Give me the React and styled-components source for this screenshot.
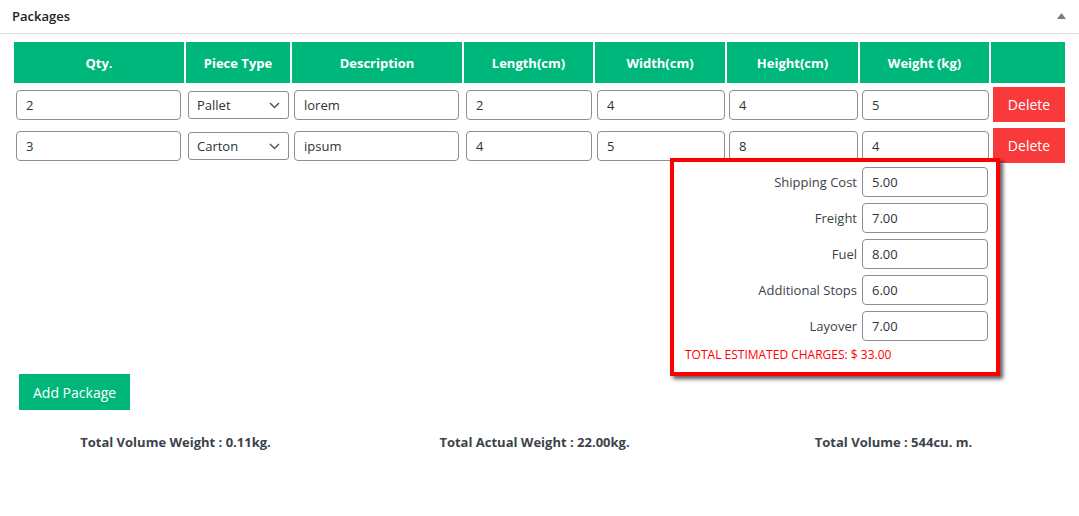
import React from 'react';
import styled, { createGlobalStyle } from 'styled-components';

const GlobalStyle = createGlobalStyle`
  html, body {
    margin: 0;
    padding: 0;
    background: #ffffff;
  }
  body {
    font-family: "Open Sans", "Noto Sans", Arial, sans-serif;
    font-size: 13px;
    color: #3c434a;
  }
  *, *::before, *::after {
    box-sizing: border-box;
  }
`;

const Panel = styled.section`
  width: 1079px;
  min-height: 516px;
  background: #ffffff;
`;

const PanelHeader = styled.div`
  height: 34px;
  display: flex;
  align-items: center;
  justify-content: space-between;
  padding: 0 12px;
  border-bottom: 1px solid #dcdcde;
`;

const PanelTitle = styled.h2`
  margin: 0;
  font-size: 13px;
  font-weight: 600;
  color: #1d2327;
  line-height: 1;
`;

const ToggleButton = styled.button`
  border: 0;
  background: none;
  padding: 0;
  width: 12px;
  height: 12px;
  display: flex;
  align-items: center;
  justify-content: center;
  cursor: pointer;
  margin-top: -2px;
`;

const PanelBody = styled.div`
  padding: 6px 12px 0;
`;

const PackageTable = styled.table`
  border-collapse: separate;
  border-spacing: 2px;
  table-layout: fixed;
  width: 1055px;
`;

const HeadCell = styled.th`
  background: #00b77b;
  color: #ffffff;
  height: 41px;
  padding: 0;
  font-size: 13px;
  font-weight: 700;
  text-align: center;
`;

const Cell = styled.td`
  height: 39px;
  padding: 2px ${(p) => p.$right ?? 3}px 2px 2px;
  vertical-align: middle;
`;

const Field = styled.input`
  display: block;
  width: 100%;
  height: 30px;
  border: 1px solid #8c8f94;
  border-radius: 4px;
  padding: 0 9px;
  background: #ffffff;
  font-family: inherit;
  font-size: 13px;
  color: #2c3338;
  outline: none;
`;

const SelectWrap = styled.div`
  position: relative;
  width: 100%;
`;

const Select = styled.select`
  display: block;
  width: 100%;
  height: 28px;
  border: 1px solid #8c8f94;
  border-radius: 3px;
  padding: 0 24px 0 8px;
  background: #ffffff;
  appearance: none;
  -webkit-appearance: none;
  font-family: inherit;
  font-size: 13px;
  color: #2c3338;
  outline: none;
`;

const Chevron = styled.svg`
  position: absolute;
  right: 9px;
  top: 50%;
  margin-top: -3px;
  pointer-events: none;
`;

const DeleteButton = styled.button`
  display: block;
  width: 100%;
  height: 35px;
  border: 0;
  border-radius: 0;
  background: #f93a3a;
  color: #ffffff;
  font-family: inherit;
  font-size: 14px;
  cursor: pointer;
`;

const ChargesRow = styled.div`
  display: flex;
  justify-content: flex-end;
  margin-top: -9px;
  padding-right: 67px;
`;

const ChargesBox = styled.div`
  width: 330px;
  border: 4px solid #ff0000;
  box-shadow: 3px 3px 4px rgba(0, 0, 0, 0.65);
  padding: 5px 8px 9px 11px;
  background: #ffffff;
`;

const ChargeGrid = styled.div`
  display: grid;
  grid-template-columns: 1fr 126px;
  column-gap: 5px;
  row-gap: 6px;
  align-items: center;
`;

const ChargeLabel = styled.label`
  text-align: right;
  font-size: 13px;
  color: #3c434a;
`;

const TotalCharges = styled.div`
  margin-top: 6px;
  font-size: 12px;
  line-height: 16px;
  color: #ff0000;
`;

const AddButton = styled.button`
  display: block;
  margin: -2px 0 0 7px;
  height: 36px;
  padding: 0 14px;
  border: 0;
  background: #00b77b;
  color: #ffffff;
  font-family: inherit;
  font-size: 14px;
  cursor: pointer;
`;

const Totals = styled.div`
  display: grid;
  grid-template-columns: repeat(3, 359px);
  margin: 23px 0 0 -16px;
`;

const TotalItem = styled.div`
  text-align: center;
  font-size: 13px;
  font-weight: 700;
  color: #3c434a;
`;

const columns = [
  { label: 'Qty.', width: 170 },
  { label: 'Piece Type', width: 104 },
  { label: 'Description', width: 170 },
  { label: 'Length(cm)', width: 129 },
  { label: 'Width(cm)', width: 130 },
  { label: 'Height(cm)', width: 131 },
  { label: 'Weight (kg)', width: 129 },
  { label: '', width: 74 },
];

const packages = [
  { qty: '2', type: 'Pallet', desc: 'lorem', length: '2', width: '4', height: '4', weight: '5' },
  { qty: '3', type: 'Carton', desc: 'ipsum', length: '4', width: '5', height: '8', weight: '4' },
];

const charges = [
  { label: 'Shipping Cost', value: '5.00' },
  { label: 'Freight', value: '7.00' },
  { label: 'Fuel', value: '8.00' },
  { label: 'Additional Stops', value: '6.00' },
  { label: 'Layover', value: '7.00' },
];

function PieceSelect({ value }) {
  return (
    <SelectWrap>
      <Select defaultValue={value}>
        <option>Pallet</option>
        <option>Carton</option>
        <option>Crate</option>
      </Select>
      <Chevron width="11" height="7" viewBox="0 0 11 7">
        <path d="M1 1 L5.5 5.5 L10 1" fill="none" stroke="#50575e" strokeWidth="1.5" />
      </Chevron>
    </SelectWrap>
  );
}

export default function App() {
  return (
    <>
      <GlobalStyle />
      <Panel>
        <PanelHeader>
          <PanelTitle>Packages</PanelTitle>
          <ToggleButton aria-label="Toggle panel">
            <svg width="9" height="6" viewBox="0 0 9 6">
              <path d="M4.5 0 L9 6 L0 6 Z" fill="#787c82" />
            </svg>
          </ToggleButton>
        </PanelHeader>
        <PanelBody>
          <PackageTable>
            <colgroup>
              {columns.map((c, i) => (
                <col key={i} style={{ width: c.width }} />
              ))}
            </colgroup>
            <thead>
              <tr>
                {columns.map((c, i) => (
                  <HeadCell key={i}>{c.label}</HeadCell>
                ))}
              </tr>
            </thead>
            <tbody>
              {packages.map((p, i) => (
                <tr key={i}>
                  <Cell><Field defaultValue={p.qty} /></Cell>
                  <Cell $right={1}><PieceSelect value={p.type} /></Cell>
                  <Cell><Field defaultValue={p.desc} /></Cell>
                  <Cell $right={1}><Field defaultValue={p.length} /></Cell>
                  <Cell $right={0}><Field defaultValue={p.width} /></Cell>
                  <Cell $right={0}><Field defaultValue={p.height} /></Cell>
                  <Cell $right={0}><Field defaultValue={p.weight} /></Cell>
                  <Cell $right={0}><DeleteButton>Delete</DeleteButton></Cell>
                </tr>
              ))}
            </tbody>
          </PackageTable>

          <ChargesRow>
            <ChargesBox>
              <ChargeGrid>
                {charges.map((c) => (
                  <React.Fragment key={c.label}>
                    <ChargeLabel>{c.label}</ChargeLabel>
                    <Field defaultValue={c.value} />
                  </React.Fragment>
                ))}
              </ChargeGrid>
              <TotalCharges>TOTAL ESTIMATED CHARGES: $ 33.00</TotalCharges>
            </ChargesBox>
          </ChargesRow>

          <AddButton>Add Package</AddButton>

          <Totals>
            <TotalItem>Total Volume Weight : 0.11kg.</TotalItem>
            <TotalItem>Total Actual Weight : 22.00kg.</TotalItem>
            <TotalItem>Total Volume : 544cu. m.</TotalItem>
          </Totals>
        </PanelBody>
      </Panel>
    </>
  );
}
